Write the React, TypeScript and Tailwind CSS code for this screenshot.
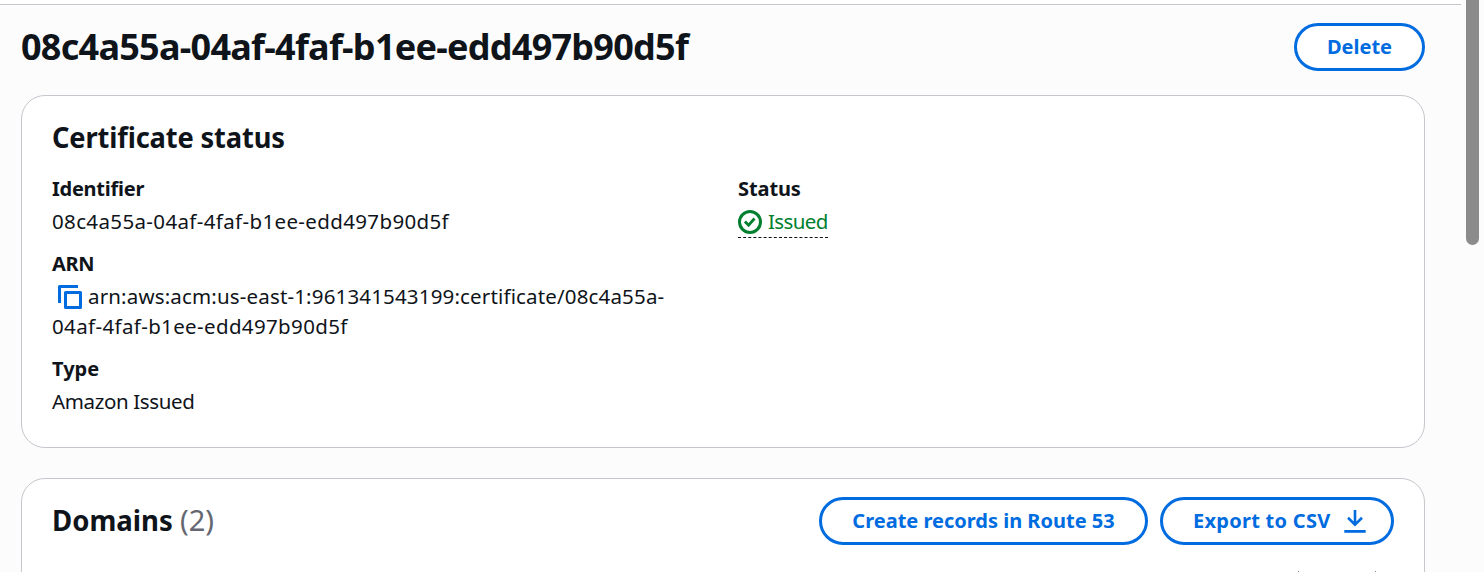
import type { ReactNode } from "react";

function Field({ label, children }: { label: ReactNode; children: ReactNode }) {
  return (
    <div className="flex flex-col gap-[2px]">
      <div className="h-[30px] font-bold">{label}</div>
      <div className="min-h-[30px] whitespace-nowrap text-[20.5px]">{children}</div>
    </div>
  );
}

function CopyIcon() {
  return (
    <svg className="ml-[6px] mr-[6px] mt-1 h-6 w-6 shrink-0" viewBox="0 0 24 24" fill="none" stroke="#006ce0" strokeWidth="3" strokeLinejoin="round">
      <path d="M1.5 18V1.5H20" />
      <path d="M7.5 7.5h15v15h-15z" />
    </svg>
  );
}

function StatusIcon() {
  return (
    <svg className="h-6 w-6 shrink-0" viewBox="0 0 24 24" fill="none" stroke="#00802f" strokeWidth="3">
      <circle cx="12" cy="12" r="10.5" />
      <path d="M6.9 11.4l3.7 3.8 5.9-6.7" strokeWidth="2.8" />
    </svg>
  );
}

function DownloadIcon() {
  return (
    <svg className="h-6 w-6 shrink-0" viewBox="0 0 24 24" fill="none" stroke="#006ce0" strokeWidth="2.6">
      <path d="M12 1v15M5 8.8l7 6.8 7-6.8" />
      <path d="M1.3 22.4h21.4" strokeWidth="2.8" />
    </svg>
  );
}

const button =
  "flex h-12 shrink-0 items-center justify-center whitespace-nowrap rounded-full border-[3px] border-[#006ce0] bg-white font-bold leading-[30px] text-[#006ce0]";

export default function App() {
  return (
    <div className="relative h-[572px] overflow-hidden bg-[#fcfcfd] font-['Noto_Sans','Open_Sans',sans-serif] text-[20px] leading-[30px] text-[#0f141a]">
      <div className="h-[5px] w-[1461px] border-b border-[#c6c6cd] bg-white" />
      <main className="ml-[21px] w-[1404px] pt-[18px]">
        <header className="flex h-[72px] items-start justify-between">
          <h1 className="whitespace-nowrap pt-px text-[36px] font-bold leading-[45px] tracking-[-0.74px]">08c4a55a-04af-4faf-b1ee-edd497b90d5f</h1>
          <button className={`${button} w-[131px]`}>
            <span>Delete</span>
          </button>
        </header>

        <section className="h-[353px] rounded-[24px] border border-[#c6c6cd] bg-white px-[30px] pt-[23px]">
          <div className="h-[55px]">
            <h2 className="inline-block origin-left scale-x-[0.94] whitespace-nowrap text-[29px] font-bold leading-[36px] tracking-[-0.15px]">Certificate status</h2>
          </div>
          <div className="grid grid-cols-[686px_1fr]">
            <div className="flex flex-col gap-[13px]">
              <Field label={<span className="tracking-[-0.25px]">Identifier</span>}>
                <span className="tracking-[0.36px]">08c4a55a-04af-4faf-b1ee-edd497b90d5f</span>
              </Field>
              <Field label={<span className="tracking-[-0.3px]">ARN</span>}>
                <div className="flex h-[30px]">
                  <CopyIcon />
                  <span className="tracking-[0.16px]">arn:aws:acm:us-east-1:961341543199:certificate/08c4a55a-</span>
                </div>
                <span className="tracking-[0.36px]">04af-4faf-b1ee-edd497b90d5f</span>
              </Field>
              <Field label={<span>Type</span>}>
                <span className="tracking-[-0.36px]">Amazon Issued</span>
              </Field>
            </div>
            <Field label={<span className="tracking-[-0.1px]">Status</span>}>
              <div className="flex h-8 w-[90px] gap-[6px] border-b border-dashed border-[#0f141a] text-[#00802f]">
                <div className="pt-1">
                  <StatusIcon />
                </div>
                <span className="tracking-[-0.6px]">Issued</span>
              </div>
            </Field>
          </div>
        </section>

        <section className="mt-[30px] h-[160px] rounded-t-[24px] border border-[#c6c6cd] bg-white px-[30px] pt-[18px]">
          <div className="flex h-[74px] items-start justify-between">
            <h2 className="flex pt-[5px] text-[29px] font-bold leading-[36px]">
              <span className="w-[128px] origin-left scale-x-[0.95]">Domains</span>
              <span className="font-normal text-[#656871]">(2)</span>
            </h2>
            <div className="flex gap-3">
              <button className={`${button} w-[329px]`}>
                <span>Create records in Route 53</span>
              </button>
              <button className={`${button} w-[234px] pl-[6px]`}>
                <span className="w-[150px] text-left tracking-[0.27px]">Export to CSV</span>
                <DownloadIcon />
              </button>
            </div>
          </div>
          <div className="flex justify-end gap-[76px] pr-[18px]">
            <span className="h-2 w-px bg-[#8c8c94]" />
            <span className="h-2 w-px bg-[#8c8c94]" />
          </div>
        </section>
      </main>
      <div className="absolute right-[5px] top-[-20px] h-[265px] w-[13px] rounded-full bg-[#8b8b8b]" />
    </div>
  );
}
